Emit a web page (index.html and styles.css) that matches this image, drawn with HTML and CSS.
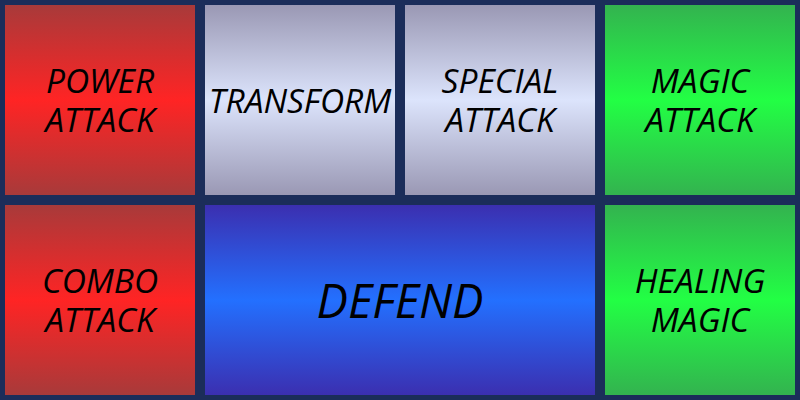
FILE: index.html
```html
<!DOCTYPE html>
<html>
<head>
<meta charset="utf-8">
<link rel="stylesheet" href="styles.css">
</head>
<body>
<div class="board">
  <div class="btn red">POWER<br>ATTACK</div>
  <div class="btn grey">TRANSFORM</div>
  <div class="btn grey">SPECIAL<br>ATTACK</div>
  <div class="btn green">MAGIC<br>ATTACK</div>
  <div class="btn red">COMBO<br>ATTACK</div>
  <div class="btn blue wide">DEFEND</div>
  <div class="btn green">HEALING<br>MAGIC</div>
</div>
</body>
</html>
```
FILE: styles.css
```css
html, body {
  margin: 0;
  padding: 0;
  background: #1b2d5a;
}
.board {
  width: 800px;
  height: 400px;
  box-sizing: border-box;
  padding: 5px;
  display: grid;
  grid-template-columns: repeat(4, 190px);
  grid-template-rows: repeat(2, 190px);
  gap: 10px;
}
.btn {
  display: flex;
  align-items: center;
  justify-content: center;
  text-align: center;
  font-family: "Open Sans", sans-serif;
  font-style: italic;
  font-size: 33.5px;
  line-height: 39px;
  color: #000;
}
.wide {
  grid-column: span 2;
  font-size: 47px;
}
.red { background: linear-gradient(#a83a3a, #ff2424 50%, #a83a3a); }
.grey { background: linear-gradient(#9a98b4, #dce4fc 50%, #9a98b4); }
.green { background: linear-gradient(#33b34f, #22ff44 50%, #33b34f); }
.blue { background: linear-gradient(#3b2fb0, #2370ff 50%, #3b2fb0); }
```
